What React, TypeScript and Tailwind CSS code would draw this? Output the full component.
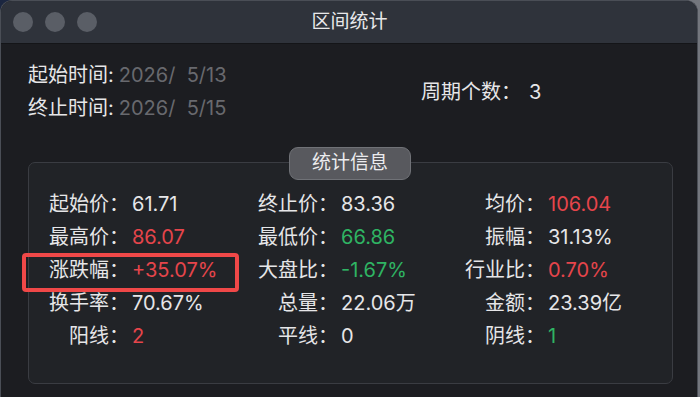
import React from "react";

const RED = "text-[#e5454b]";
const GREEN = "text-[#2fb463]";
const WHITE = "text-[#e6e6e8]";

type Cell = { l: string; v: string; c: string };

const rows: Cell[][] = [
  [
    { l: "起始价：", v: "61.71", c: WHITE },
    { l: "终止价：", v: "83.36", c: WHITE },
    { l: "均价：", v: "106.04", c: RED },
  ],
  [
    { l: "最高价：", v: "86.07", c: RED },
    { l: "最低价：", v: "66.86", c: GREEN },
    { l: "振幅：", v: "31.13%", c: WHITE },
  ],
  [
    { l: "涨跌幅：", v: "+35.07%", c: RED },
    { l: "大盘比：", v: "-1.67%", c: GREEN },
    { l: "行业比：", v: "0.70%", c: RED },
  ],
  [
    { l: "换手率：", v: "70.67%", c: WHITE },
    { l: "总量：", v: "22.06万", c: WHITE },
    { l: "金额：", v: "23.39亿", c: WHITE },
  ],
  [
    { l: "阳线：", v: "2", c: RED },
    { l: "平线：", v: "0", c: WHITE },
    { l: "阴线：", v: "1", c: GREEN },
  ],
];

export default function App() {
  return (
    <div
      className="w-[700px] h-[397px] overflow-hidden bg-[linear-gradient(90deg,#1b2640,#3a3f4a_60%,#74777e)]"
      style={{ fontFamily: 'Inter, "Noto Sans CJK SC", sans-serif' }}
    >
      <div className="w-[698px] h-[397px] rounded-t-[12px] overflow-hidden border-t border-l border-r border-[#4a4e56] flex flex-col bg-[#1c1d21]">
        {/* title bar */}
        <div className="relative h-[43px] shrink-0 bg-[#2f333b] border-b border-[#141518] flex items-center">
          <div className="flex gap-[12px] pl-[12px]">
            <div className="w-[20px] h-[20px] rounded-full bg-[#5a5e66]" />
            <div className="w-[20px] h-[20px] rounded-full bg-[#5a5e66]" />
            <div className="w-[20px] h-[20px] rounded-full bg-[#5a5e66]" />
          </div>
          <div className="absolute inset-0 flex items-center justify-center text-[19px] text-[#e8e8ea] pl-[1px]">
            区间统计
          </div>
        </div>

        {/* top info */}
        <div className="flex pl-[27px] pt-[15px] text-[20px] leading-[33px]">
          <div className="flex flex-col w-[393px]">
            <div className="flex">
              <span className={WHITE}>起始时间:</span>
              <span className="text-[#68696e] ml-[5px] whitespace-pre">2026/  5/13</span>
            </div>
            <div className="flex">
              <span className={WHITE}>终止时间:</span>
              <span className="text-[#68696e] ml-[5px] whitespace-pre">2026/  5/15</span>
            </div>
          </div>
          <div className="flex items-center">
            <span className={WHITE}>周期个数：</span>
            <span className={`${WHITE} ml-[8px]`}>3</span>
          </div>
        </div>

        {/* group */}
        <div className="relative ml-[27px] mr-[24px] mt-[37px] h-[222px] rounded-[7px] border border-[#3a3c42] bg-[#212327]">
          <div className="absolute left-[260px] top-[-16px] w-[122px] h-[33px] rounded-[9px] bg-[#58595e] border border-[#707277] flex items-center justify-center text-[19px] text-[#ececee]">
            统计信息
          </div>
          <div className="grid grid-cols-[100px_109px_100px_107px_100px_1fr] pt-[25px] text-[20px] leading-[33px]">
            {rows.map((r, i) => (
              <React.Fragment key={i}>
                {r.map((c, j) => (
                  <React.Fragment key={j}>
                    <div className={`text-right ${WHITE}`}>{c.l}</div>
                    <div className={`pl-[3px] ${c.c}`}>{c.v}</div>
                  </React.Fragment>
                ))}
              </React.Fragment>
            ))}
          </div>
          <div className="absolute left-[-7px] top-[90px] w-[217px] h-[39px] border-4 border-[#f04848] rounded-[4px]" />
        </div>
      </div>
    </div>
  );
}
